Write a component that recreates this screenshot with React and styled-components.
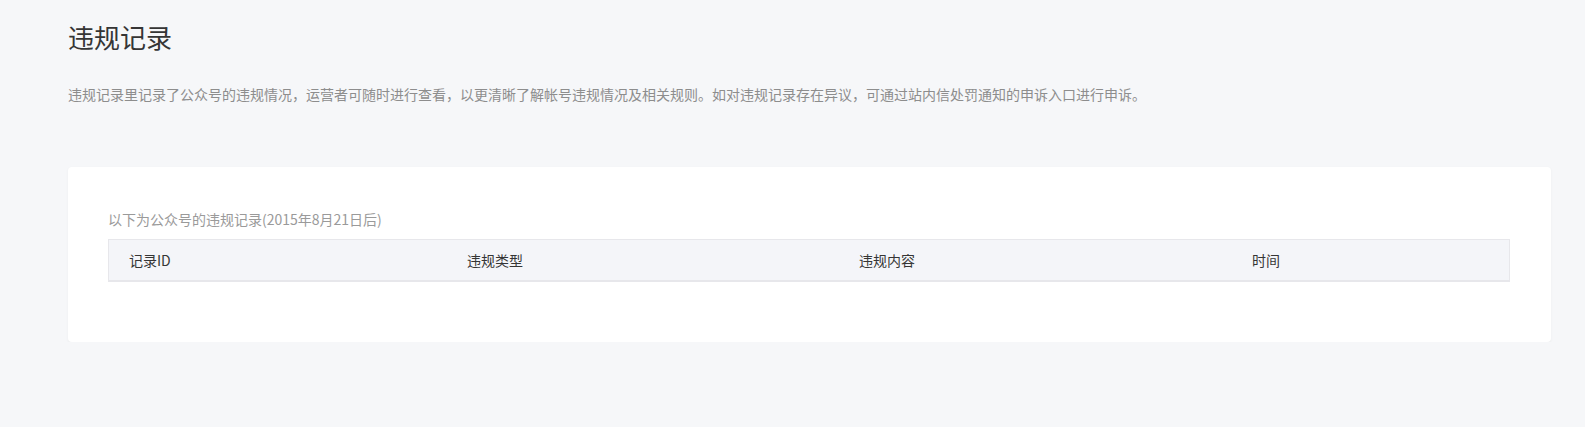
import React from "react";
import styled, { createGlobalStyle } from "styled-components";

const GlobalStyle = createGlobalStyle`
  body {
    margin: 0;
    background: #f6f7f9;
    font-family: "Noto Sans CJK SC", "Liberation Sans", sans-serif;
  }
`;

const columns = [
  { label: "记录ID", width: 338 },
  { label: "违规类型", width: 392 },
  { label: "违规内容", width: 393 },
  { label: "时间", width: null },
];

const App = () => {
  return (
    <Page>
      <GlobalStyle />
      <Title>违规记录</Title>
      <Desc>
        违规记录里记录了公众号的违规情况，运营者可随时进行查看，以更清晰了解帐号违规情况及相关规则。如对违规记录存在异议，可通过站内信处罚通知的申诉入口进行申诉。
      </Desc>
      <Card>
        <Caption>以下为公众号的违规记录(2015年8月21日后)</Caption>
        <Table>
          <HeadRow>
            {columns.map((c) => (
              <HeadCell key={c.label} $width={c.width}>
                {c.label}
              </HeadCell>
            ))}
          </HeadRow>
        </Table>
      </Card>
    </Page>
  );
};

const Page = styled.div`
  padding: 21px 34px 0 68px;
`;

const Title = styled.h2`
  margin: 0;
  font-size: 26px;
  line-height: 32px;
  font-weight: 400;
  color: #353535;
`;

const Desc = styled.p`
  margin: 31px 0 0;
  font-size: 14px;
  line-height: 20px;
  color: #8d8d8d;
`;

const Card = styled.div`
  margin-top: 63px;
  background: #fff;
  border-radius: 4px;
  box-shadow: 0 1px 2px rgba(150, 150, 150, 0.1);
  padding: 42px 41px 60px 40px;
`;

const Caption = styled.div`
  font-size: 14px;
  line-height: 20px;
  color: #9a9a9a;
`;

const Table = styled.div`
  margin-top: 10px;
  border: 1px solid #e7e7eb;
  border-bottom-width: 2px;
`;

const HeadRow = styled.div`
  display: flex;
  height: 40px;
  background: #f4f5f9;
`;

const HeadCell = styled.div`
  ${({ $width }) => ($width ? `width: ${$width}px;` : "flex: 1;")}
  box-sizing: border-box;
  padding-left: 20px;
  display: flex;
  align-items: center;
  font-size: 14px;
  color: #353535;
`;

export default App;
